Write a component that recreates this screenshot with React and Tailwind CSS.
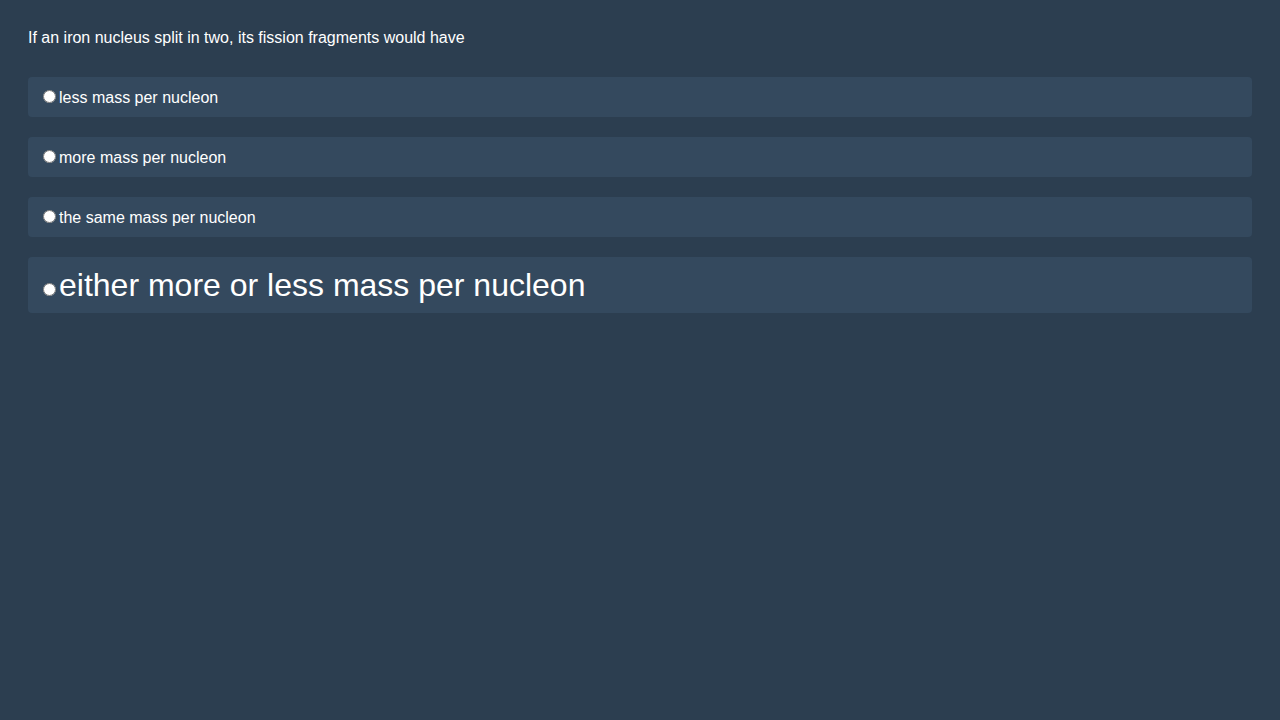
import React, { useState } from 'react';

const options = [
  { id: 'a', text: 'less mass per nucleon' },
  { id: 'b', text: 'more mass per nucleon' },
  { id: 'c', text: 'the same mass per nucleon' },
  { id: 'd', text: 'either more or less mass per nucleon', big: true },
];

const App = () => {
  const [answer, setAnswer] = useState(null);

  return (
    <div
      className="min-h-screen w-full bg-[#2c3e50] px-[28px] pt-[28px] text-white"
      style={{ fontFamily: '"Liberation Sans", Arial, sans-serif' }}
    >
      <p className="text-[16px] leading-5">
        If an iron nucleus split in two, its fission fragments would have
      </p>

      <div className="mt-[29px] flex flex-col gap-5">
        {options.map((opt) => (
          <label
            key={opt.id}
            className={`block rounded bg-[#34495e] pl-[15px] ${
              opt.big ? 'py-[10px] text-[32px] leading-9' : 'pt-[11px] pb-[9px] text-[16px] leading-5'
            }`}
          >
            <input
              type="radio"
              name="answer"
              checked={answer === opt.id}
              onChange={() => setAnswer(opt.id)}
              className="mr-[3px] h-[13px] w-[13px] align-baseline"
            />
            {opt.text}
          </label>
        ))}
      </div>
    </div>
  );
};

export default App;
